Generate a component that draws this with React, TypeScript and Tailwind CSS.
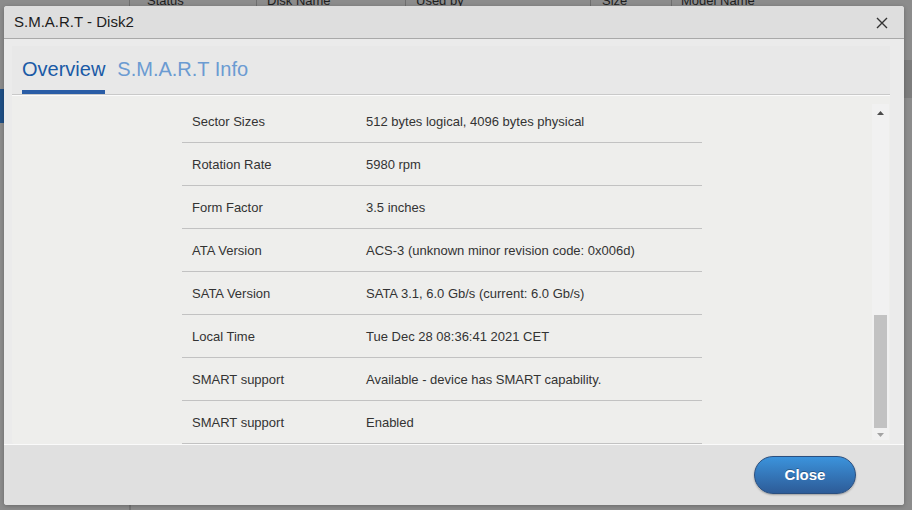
import React from "react";

const rows: [string, string][] = [
  ["Sector Sizes", "512 bytes logical, 4096 bytes physical"],
  ["Rotation Rate", "5980 rpm"],
  ["Form Factor", "3.5 inches"],
  ["ATA Version", "ACS-3 (unknown minor revision code: 0x006d)"],
  ["SATA Version", "SATA 3.1, 6.0 Gb/s (current: 6.0 Gb/s)"],
  ["Local Time", "Tue Dec 28 08:36:41 2021 CET"],
  ["SMART support", "Available - device has SMART capability."],
  ["SMART support", "Enabled"],
];

export default function App() {
  return (
    <div
      className="relative w-[912px] h-[510px] overflow-hidden bg-[#8c8c8c]"
      style={{ fontFamily: '"Liberation Sans", Arial, sans-serif' }}
    >
      {/* background page (dimmed) */}
      <div className="absolute left-0 top-[-9px] flex h-[15px] text-[13px] text-[#1e1e1e]">
        <div className="w-[130px] border-r border-[#6f6f6f]" />
        <div className="w-[127px] border-r border-[#6f6f6f] pl-[17px]">Status</div>
        <div className="w-[149px] border-r border-[#6f6f6f] pl-[10px]">Disk Name</div>
        <div className="w-[185px] border-r border-[#6f6f6f] pl-[10px]">Used by</div>
        <div className="w-[81px] border-r border-[#6f6f6f] pl-[11px]">Size</div>
        <div className="w-[200px] pl-[9px]">Model Name</div>
      </div>
      <div className="absolute left-0 top-[89px] h-[34px] w-[4px] bg-[#1f4f86]" />
      <div className="absolute left-[129px] top-[500px] h-[10px] w-[2px] bg-[#777]" />
      <div className="absolute right-0 top-[60px] h-[38px] w-[8px] bg-[#7d7d7d]" />

      {/* modal */}
      <div className="absolute left-[4px] top-[6px] flex h-[499px] w-[900px] flex-col overflow-hidden rounded-[3px] bg-[#ebebeb] shadow-[0_1px_4px_rgba(0,0,0,0.25)]">
        {/* header */}
        <div className="flex h-[33px] shrink-0 items-center justify-between border-b border-[#a9a9a9] bg-[#dedede] pl-[10px] pr-[16px]">
          <span className="text-[15px] text-[#1c1c1c]">S.M.A.R.T - Disk2</span>
          <svg width="12" height="12" viewBox="0 0 12 12" className="mt-[2px]">
            <path d="M1 1 L11 11 M11 1 L1 11" stroke="#333" strokeWidth="1.4" />
          </svg>
        </div>

        {/* body */}
        <div className="flex flex-1 flex-col pl-[8px] pr-[14px] pt-[7px]">
          {/* tabs */}
          <div className="flex h-[49px] shrink-0 items-end gap-[12px] border-b border-[#c9c9c9] bg-[#e8e8e8] pl-[10px] shadow-[0_1px_0_#fbfbfb]">
            <div className="flex flex-col">
              <span className="text-[20px] leading-[24px] text-[#1a5aa6]">Overview</span>
              <div className="mt-[9px] h-[4px] bg-[#2a5da6]" />
            </div>
            <span className="mb-[13px] text-[20px] leading-[24px] text-[#6b9bd2]">S.M.A.R.T Info</span>
          </div>

          {/* content */}
          <div className="mt-[1px] flex h-[348px] shrink-0 rounded-bl-[3px] bg-[#eeeeec]">
            <div className="w-[170px] shrink-0" />
            <div className="w-[520px] shrink-0 pt-[4px]">
              {rows.map(([k, v], i) => (
                <div
                  key={i}
                  className="flex h-[43px] items-center border-b border-[#c2c2c2] pt-[2px] text-[13px] text-[#333]"
                >
                  <div className="w-[184px] shrink-0 pl-[10px]">{k}</div>
                  <div>{v}</div>
                </div>
              ))}
            </div>
            <div className="flex-1" />
            {/* scrollbar */}
            <div className="mr-[1px] mt-[8px] mb-[4px] flex w-[17px] flex-col items-center bg-[#f1f1f1]">
              <svg width="9" height="6" viewBox="0 0 9 6" className="mt-[6px]">
                <path d="M4.5 1 L8 5 L1 5 Z" fill="#4a4a4a" />
              </svg>
              <div className="flex-1" />
              <div className="h-[113px] w-[13px] bg-[#c2c2c2]" />
              <svg width="9" height="6" viewBox="0 0 9 6" className="mt-[4px] mb-[2px]">
                <path d="M1 1 L8 1 L4.5 5 Z" fill="#a3a3a3" />
              </svg>
            </div>
          </div>
        </div>

        {/* footer */}
        <div className="flex h-[61px] shrink-0 items-center justify-end border-t border-[#fafafa] bg-[#e0e0e0] pr-[48px]">
          <button className="h-[38px] w-[102px] rounded-full border border-[#2b4f7f] bg-gradient-to-b from-[#3b93dc] to-[#2d5c98] text-[15px] font-bold text-white shadow-[0_1px_2px_rgba(0,0,0,0.3)] [text-shadow:0_-1px_0_rgba(0,0,0,0.3)]">
            Close
          </button>
        </div>
      </div>
    </div>
  );
}
